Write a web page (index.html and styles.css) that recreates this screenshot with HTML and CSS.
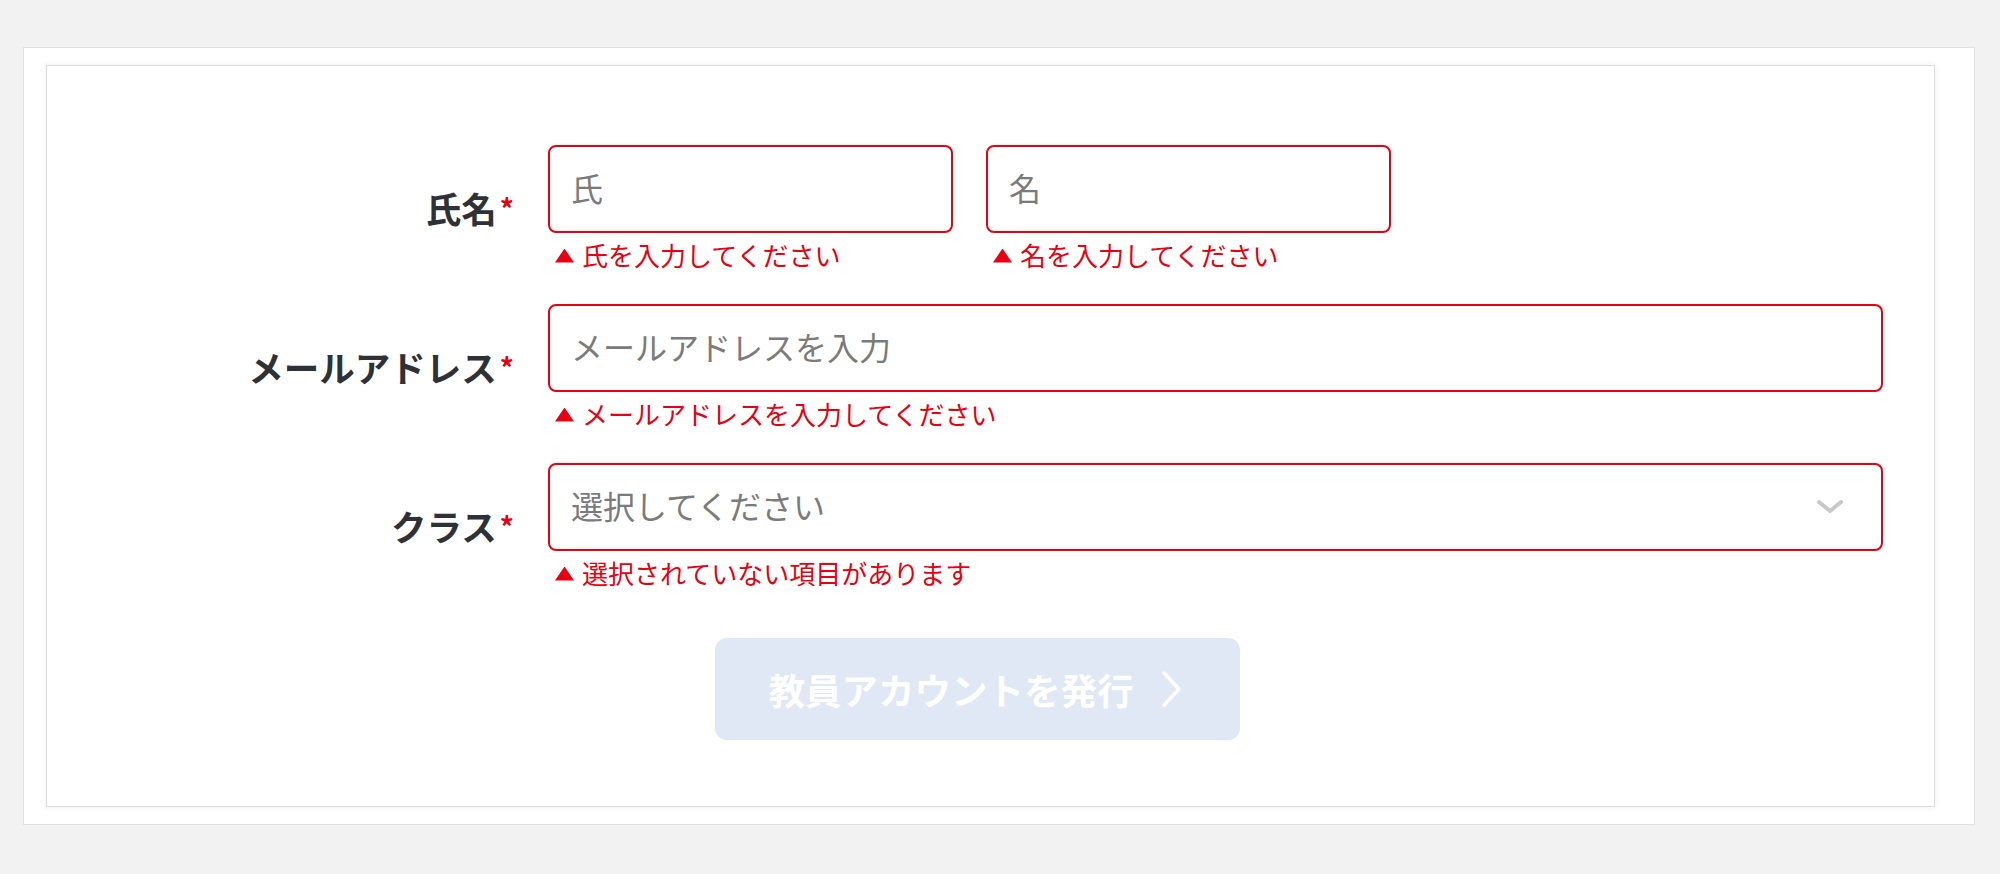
FILE: index.html
```html
<!DOCTYPE html>
<html lang="ja">
<head>
<meta charset="utf-8">
<title>教員アカウント発行</title>
<link rel="stylesheet" href="styles.css">
</head>
<body>
<div class="frame">
  <div class="card">
    <form class="form">
      <div class="label">氏名<span class="req">*</span></div>
      <div class="field">
        <div class="name-inputs">
          <div class="name-col">
            <input class="input input-half" type="text" placeholder="氏">
            <p class="error"><span class="tri"></span>氏を入力してください</p>
          </div>
          <div class="name-col">
            <input class="input input-half" type="text" placeholder="名">
            <p class="error"><span class="tri"></span>名を入力してください</p>
          </div>
        </div>
      </div>

      <div class="label">メールアドレス<span class="req">*</span></div>
      <div class="field">
        <input class="input" type="text" placeholder="メールアドレスを入力">
        <p class="error"><span class="tri"></span>メールアドレスを入力してください</p>
      </div>

      <div class="label">クラス<span class="req">*</span></div>
      <div class="field">
        <div class="input select">
          <span class="placeholder">選択してください</span>
          <svg class="caret" width="28" height="16" viewBox="0 0 28 16"><path d="M3 3 L14 12 L25 3" fill="none" stroke="#c8c8c8" stroke-width="4" stroke-linecap="round" stroke-linejoin="round"/></svg>
        </div>
        <p class="error"><span class="tri"></span>選択されていない項目があります</p>
      </div>

      <div class="actions">
        <button type="button" class="submit">
          <span>教員アカウントを発行</span>
          <svg width="22" height="38" viewBox="0 0 22 38"><path d="M3 3 L18 19 L3 35" fill="none" stroke="#ffffff" stroke-width="3.5" stroke-linecap="round" stroke-linejoin="round"/></svg>
        </button>
      </div>
    </form>
  </div>
</div>
</body>
</html>
```
FILE: styles.css
```css
* { box-sizing: border-box; }

html, body {
  margin: 0;
  padding: 0;
  background: #f2f2f2;
  font-family: "Noto Sans CJK JP", "Noto Sans", sans-serif;
}

.frame {
  margin: 47px 0 0 23px;
  width: 1952px;
  height: 778px;
  background: #ffffff;
  border: 1px solid #e2e2e2;
  padding: 17px 39px 17px 22px;
}

.card {
  height: 100%;
  background: #ffffff;
  border: 1px solid #dedede;
  box-shadow: 0 0 6px rgba(0, 0, 0, 0.07);
  padding: 79px 51px 0 0;
}

.form {
  display: grid;
  grid-template-columns: 467px 1fr;
  column-gap: 34px;
  row-gap: 33px;
  margin: 0;
}

.label {
  align-self: center;
  text-align: right;
  font-size: 35.5px;
  font-weight: 700;
  color: #2e3236;
  line-height: 1.2;
  white-space: nowrap;
  padding-top: 1px;
}

.req {
  color: #e60012;
  font-size: 28px;
  margin-left: 3px;
  vertical-align: 3px;
}

.field {
  display: flex;
  flex-direction: column;
}

.name-inputs {
  display: flex;
  gap: 33px;
}

.name-col {
  display: flex;
  flex-direction: column;
  width: 405px;
}

.input {
  display: block;
  width: 100%;
  height: 88px;
  border: 2px solid #e60012;
  border-radius: 8px;
  background: #ffffff;
  padding: 0 22px 4px 21px;
  font-family: inherit;
  font-size: 32px;
  color: #333;
  outline: none;
  margin: 0;
}

.input::placeholder {
  color: #7b7b7b;
}

.select {
  display: flex;
  align-items: center;
  justify-content: space-between;
  padding-right: 37px;
}

.placeholder {
  color: #7b7b7b;
  font-size: 32px;
}

.caret {
  display: block;
  margin-top: 4px;
}

.error {
  margin: 6px 0 0 0;
  padding-left: 7px;
  font-size: 26px;
  line-height: 32px;
  color: #e60012;
  display: flex;
  align-items: center;
  white-space: nowrap;
}

.tri {
  display: inline-block;
  width: 19px;
  height: 14px;
  background: #e60012;
  clip-path: polygon(50% 0, 100% 100%, 0 100%);
  margin-right: 8px;
  margin-top: 1px;
}

.actions {
  grid-column: 2;
  margin-top: 16px;
  padding-left: 167px;
}

.submit {
  width: 525px;
  height: 102px;
  border: none;
  border-radius: 12px;
  background: #dfe8f4;
  color: #ffffff;
  font-family: inherit;
  font-size: 36.5px;
  font-weight: 700;
  display: flex;
  align-items: center;
  justify-content: center;
  gap: 27px;
  padding: 0 4px 0 0;
  cursor: default;
}

.submit svg {
  display: block;
}
```
